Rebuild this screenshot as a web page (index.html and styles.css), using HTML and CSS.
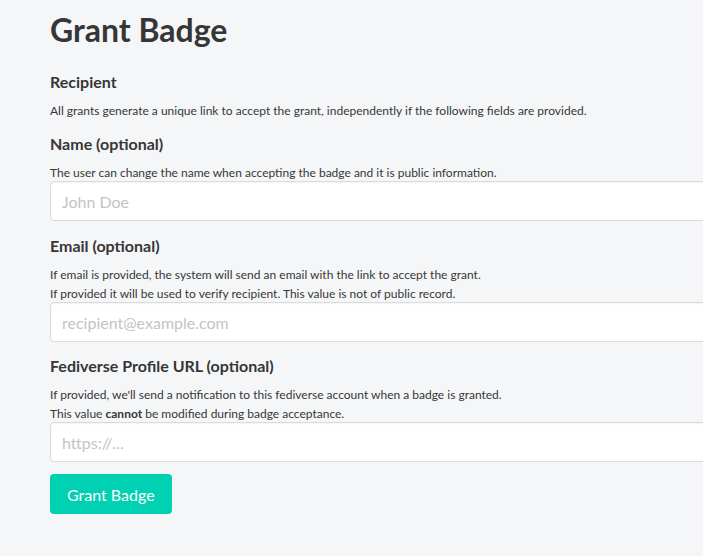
FILE: index.html
```html
<!DOCTYPE html>
<html lang="en">
<head>
<meta charset="utf-8">
<title>Grant Badge</title>
<link rel="stylesheet" href="styles.css">
</head>
<body>
<main class="page">
  <h1 class="title">Grant Badge</h1>
  <form class="form">
    <section class="field">
      <h2 class="label">Recipient</h2>
      <p class="help">All grants generate a unique link to accept the grant, independently if the following fields are provided.</p>
    </section>
    <section class="field">
      <label class="label" for="name">Name (optional)</label>
      <p class="help">The user can change the name when accepting the badge and it is public information.</p>
      <input class="input" id="name" type="text" placeholder="John Doe">
    </section>
    <section class="field">
      <label class="label" for="email">Email (optional)</label>
      <p class="help">If email is provided, the system will send an email with the link to accept the grant.<br>If provided it will be used to verify recipient. This value is not of public record.</p>
      <input class="input" id="email" type="email" placeholder="recipient@example.com">
    </section>
    <section class="field field-last">
      <label class="label" for="url">Fediverse Profile URL (optional)</label>
      <p class="help">If provided, we'll send a notification to this fediverse account when a badge is granted.<br>This value <strong>cannot</strong> be modified during badge acceptance.</p>
      <input class="input" id="url" type="url" placeholder="https://...">
    </section>
    <div class="actions">
      <button class="button" type="button">Grant Badge</button>
    </div>
  </form>
</main>
</body>
</html>
```

FILE: styles.css
```css
html, body {
  margin: 0;
  padding: 0;
  background: #f5f6f8;
  overflow: hidden;
}
body {
  font-family: "Lato", "Noto Sans", sans-serif;
  color: #363636;
  width: 703px;
  height: 556px;
}
.page {
  padding: 8px 0 0 50px;
  width: 653px;
  overflow: hidden;
}
.title {
  margin: 0 0 18px;
  font-size: 32px;
  font-weight: 700;
  line-height: 44px;
  color: #363636;
}
.form {
  display: flex;
  flex-direction: column;
  width: 760px;
}
.field {
  display: flex;
  flex-direction: column;
  margin-bottom: 13px;
}
.field-last {
  margin-top: -1px;
  margin-bottom: 12px;
}
.label {
  display: block;
  margin: 0 0 7px;
  font-size: 16px;
  font-weight: 700;
  line-height: 24px;
  color: #363636;
}
.help {
  margin: 0 0 -1px;
  font-size: 12px;
  line-height: 19px;
  color: #363636;
}
.help strong {
  font-weight: 700;
}
.input {
  box-sizing: border-box;
  height: 40px;
  width: 100%;
  margin: 0;
  padding: 0 11px;
  border: 1px solid #dbdbdb;
  border-radius: 4px;
  background: #fff;
  box-shadow: inset 0 1px 2px rgba(10, 10, 10, 0.05);
  font-family: inherit;
  font-size: 16px;
  color: #363636;
}
.input::placeholder {
  color: #c4c4c4;
}
.actions {
  display: flex;
}
.button {
  height: 40px;
  padding: 0 17px;
  border: none;
  border-radius: 4px;
  background: #00d1b2;
  color: #fff;
  font-family: inherit;
  font-size: 16px;
}
```
